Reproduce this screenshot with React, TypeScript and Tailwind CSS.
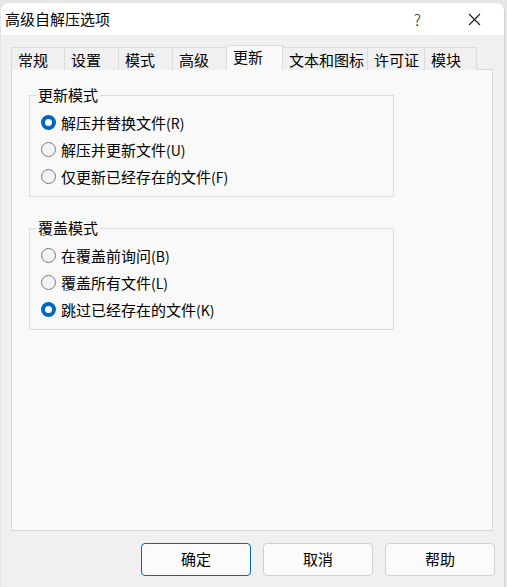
import React, { useState } from 'react';

const FONT = '"Noto Sans CJK SC", "Noto Sans", sans-serif';

const tabs = [
  { label: '常规', w: 'w-[54px]' },
  { label: '设置', w: 'w-[55px]' },
  { label: '模式', w: 'w-[55px]' },
  { label: '高级', w: 'w-[55px]' },
  { label: '更新', w: 'w-[57px]' },
  { label: '文本和图标', w: 'w-[86px]' },
  { label: '许可证', w: 'w-[58px]' },
  { label: '模块', w: 'w-[53px]' },
];

interface RadioProps {
  label: string;
  hotkey: string;
  checked: boolean;
  onSelect: () => void;
}

const Radio: React.FC<RadioProps> = ({ label, hotkey, checked, onSelect }) => (
  <div className="flex h-[27px] items-center gap-[5px] pl-[11px] cursor-default" onClick={onSelect}>
    {checked ? (
      <span className="flex h-[15px] w-[15px] items-center justify-center rounded-full bg-[#0067c0]">
        <span className="h-[7px] w-[7px] rounded-full bg-white" />
      </span>
    ) : (
      <span className="h-[15px] w-[15px] rounded-full border border-[#7a7a7a] bg-[#f3f3f3]" />
    )}
    <span className="text-[15px] leading-none text-black">
      {label}
      <span className="text-[14px]">({hotkey})</span>
    </span>
  </div>
);

interface GroupProps {
  title: string;
  options: { label: string; hotkey: string }[];
  value: number;
  onChange: (i: number) => void;
}

const Group: React.FC<GroupProps> = ({ title, options, value, onChange }) => (
  <div className="relative w-[365px] border border-[#dcdcdc] pt-[13px] pb-[6px]">
    <span className="absolute -top-[11px] left-[6px] bg-[#f9f9f9] px-[2px] text-[15px] leading-[20px] text-black">
      {title}
    </span>
    {options.map((o, i) => (
      <Radio key={o.label} label={o.label} hotkey={o.hotkey} checked={value === i} onSelect={() => onChange(i)} />
    ))}
  </div>
);

export default function App() {
  const [updateMode, setUpdateMode] = useState(0);
  const [overwriteMode, setOverwriteMode] = useState(2);
  const active = 4;

  return (
    <div className="h-[587px] w-[507px] overflow-hidden bg-[#e6e6e6]" style={{ fontFamily: FONT }}>
      <div className="ml-[1px] mt-[3px] flex h-[584px] w-[504px] flex-col overflow-hidden rounded-t-[8px] border-r border-[#d0d0d0] bg-[#f0f0f0]">
        {/* Title bar */}
        <div className="flex h-[32px] shrink-0 items-center bg-white pl-[4px]">
          <span className="text-[15px] text-black">高级自解压选项</span>
          <span className="ml-auto mr-[47px] text-[16px] font-light text-[#222]">?</span>
          <svg className="mr-[23px]" width="13" height="13" viewBox="0 0 13 13">
            <path d="M1 1L12 12M12 1L1 12" stroke="#1a1a1a" strokeWidth="1.1" />
          </svg>
        </div>

        {/* Body */}
        <div className="flex flex-1 flex-col pl-[10px] pr-[9px] pt-[10px] pb-[11px]">
          {/* Tabs */}
          <div className="relative z-10 -mb-px flex items-end">
            {tabs.map((t, i) => (
              <div
                key={t.label}
                className={`${t.w} ${i > 0 ? '-ml-px' : ''} flex items-center border border-b-0 border-[#dcdcdc] pl-[6px] text-[15px] leading-none text-black ${
                  i === active ? 'relative h-[25px] bg-[#f9f9f9] pb-[3px]' : 'h-[23px] bg-[#f0f0f0]'
                }`}
              >
                {t.label}
              </div>
            ))}
          </div>

          {/* Panel */}
          <div className="mr-[2px] flex flex-1 flex-col gap-[31px] border border-[#d9d9d9] bg-[#f9f9f9] pl-[17px] pt-[25px]">
            <Group
              title="更新模式"
              value={updateMode}
              onChange={setUpdateMode}
              options={[
                { label: '解压并替换文件', hotkey: 'R' },
                { label: '解压并更新文件', hotkey: 'U' },
                { label: '仅更新已经存在的文件', hotkey: 'F' },
              ]}
            />
            <Group
              title="覆盖模式"
              value={overwriteMode}
              onChange={setOverwriteMode}
              options={[
                { label: '在覆盖前询问', hotkey: 'B' },
                { label: '覆盖所有文件', hotkey: 'L' },
                { label: '跳过已经存在的文件', hotkey: 'K' },
              ]}
            />
          </div>

          {/* Buttons */}
          <div className="mt-[12px] flex justify-end gap-[12px]">
            <button className="h-[33px] w-[110px] rounded-[4px] border border-[#0067c0] bg-[#fbfbfb] text-[15px] text-black">
              确定
            </button>
            <button className="h-[33px] w-[110px] rounded-[4px] border border-[#d0d0d0] bg-[#fbfbfb] text-[15px] text-black">
              取消
            </button>
            <button className="h-[33px] w-[110px] rounded-[4px] border border-[#d0d0d0] bg-[#fbfbfb] text-[15px] text-black">
              帮助
            </button>
          </div>
        </div>
      </div>
    </div>
  );
}
